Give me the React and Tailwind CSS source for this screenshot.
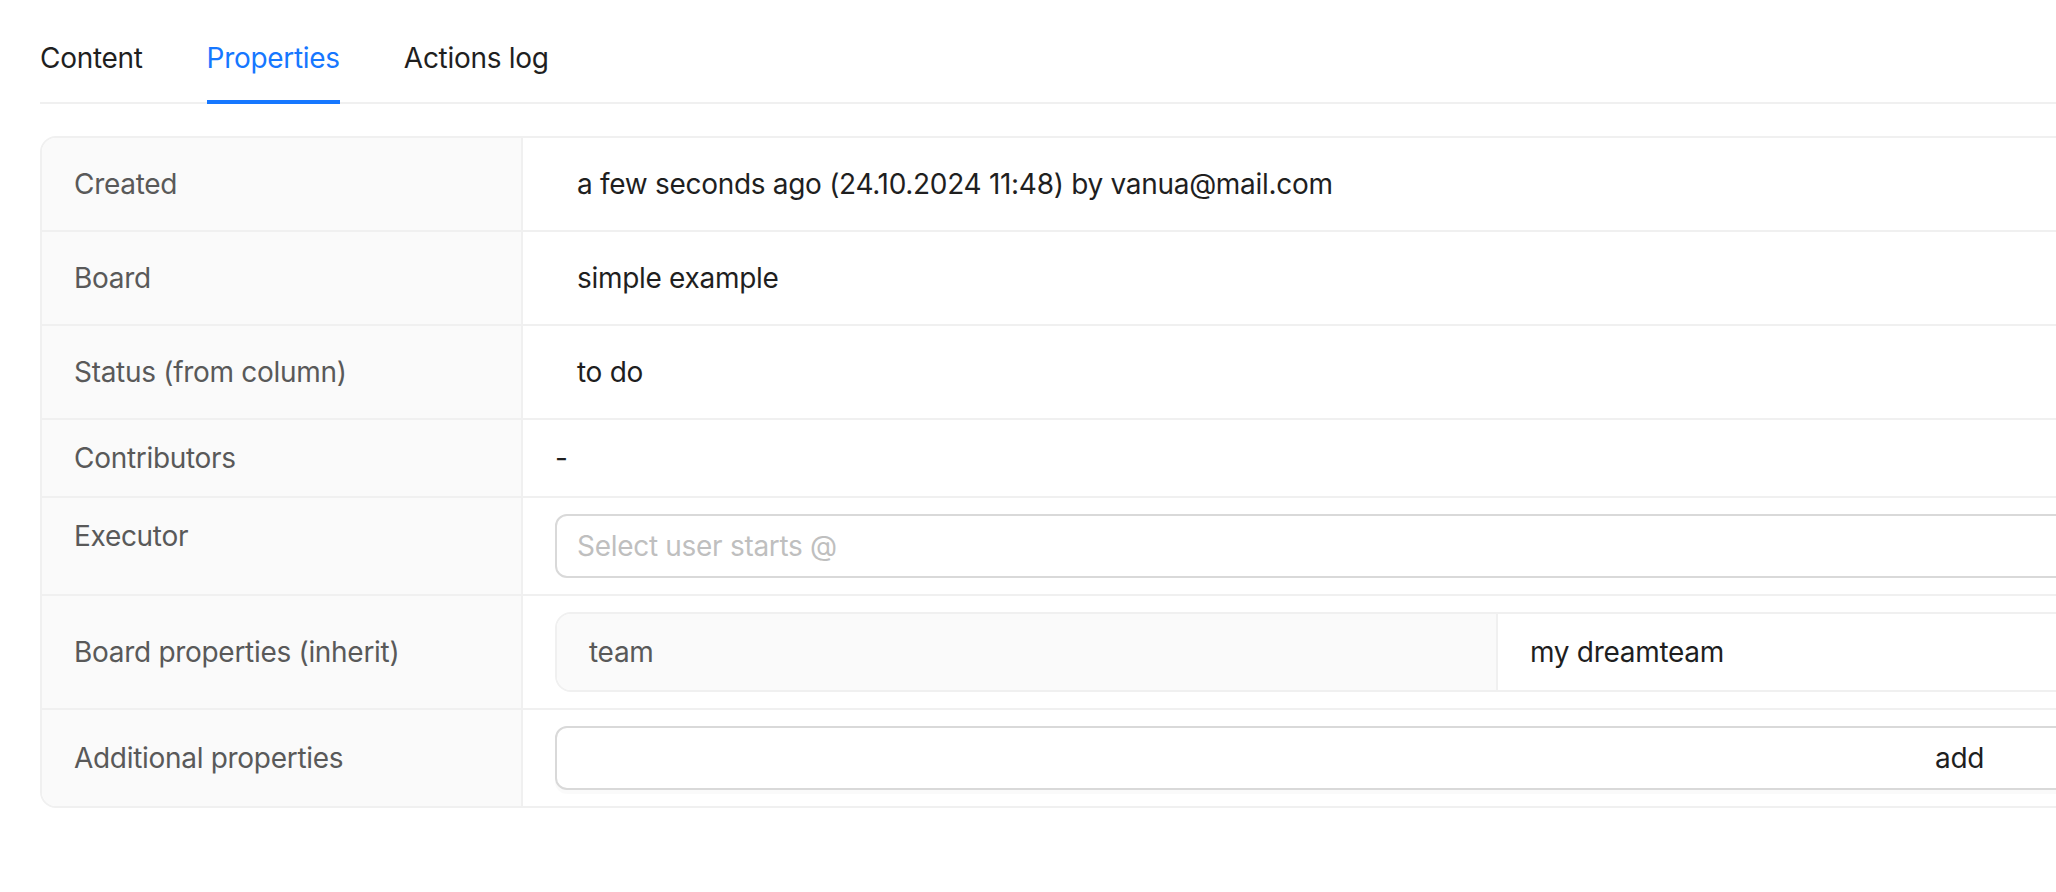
import React from 'react'

const tabs = ['Content', 'Properties', 'Actions log']

function Row({ label, children, last, labelTop }) {
  return (
    <div className={`flex ${last ? '' : 'border-b-2 border-[#f0f0f0]'}`}>
      <div
        className={`w-[481px] shrink-0 bg-[#fafafa] border-r-2 border-[#f0f0f0] px-[32px] py-[16px] flex ${
          labelTop ? 'items-start' : 'items-center'
        } text-[#595959]`}
      >
        {label}
      </div>
      <div className="flex-1 px-[32px] py-[16px] flex items-center text-[#1f1f1f]">{children}</div>
    </div>
  )
}

function Plain({ children }) {
  return <div className="h-[60px] flex items-center pl-[22px]">{children}</div>
}

export default function App() {
  return (
    <div className="w-full h-screen overflow-hidden bg-white font-['Inter','Liberation_Sans',sans-serif] text-[28px] leading-[44px] tracking-[-0.3px]">
      <div className="w-[2480px] pl-[40px] pt-[12px]">
        <div className="flex gap-[64px] border-b-2 border-[#f0f0f0]">
          {tabs.map((t) => (
            <div
              key={t}
              className={`relative pt-[24px] pb-[22px] ${t === 'Properties' ? 'text-[#1677ff]' : 'text-[#1f1f1f]'}`}
            >
              {t}
              {t === 'Properties' && (
                <div className="absolute left-0 right-0 bottom-[-2px] h-[4px] bg-[#1677ff]" />
              )}
            </div>
          ))}
        </div>

        <div className="mt-[32px] border-2 border-[#f0f0f0] rounded-[16px] overflow-hidden">
          <Row label="Created">
            <Plain>a few seconds ago (24.10.2024 11:48) by vanua@mail.com</Plain>
          </Row>
          <Row label="Board">
            <Plain>simple example</Plain>
          </Row>
          <Row label="Status (from column)">
            <Plain>to do</Plain>
          </Row>
          <Row label="Contributors">
            <span>-</span>
          </Row>
          <Row label="Executor" labelTop>
            <div className="w-full h-[64px] border-2 border-[#d9d9d9] rounded-[12px] flex items-center pl-[20px] text-[#bfbfbf]">
              Select user starts @
            </div>
          </Row>
          <Row label="Board properties (inherit)">
            <div className="w-full h-[80px] border-2 border-[#f0f0f0] rounded-[16px] overflow-hidden flex">
              <div className="w-[941px] shrink-0 bg-[#fafafa] border-r-2 border-[#f0f0f0] px-[32px] flex items-center text-[#595959]">
                team
              </div>
              <div className="flex-1 px-[32px] flex items-center text-[#1f1f1f]">my dreamteam</div>
            </div>
          </Row>
          <Row label="Additional properties" last>
            <div className="w-full h-[64px] border-2 border-[#d9d9d9] rounded-[12px] shadow-[0_4px_0_rgba(0,0,0,0.02)] flex items-center">
              <div className="w-[1348px] shrink-0" />
              <div className="px-[30px] text-[#1f1f1f]">add</div>
            </div>
          </Row>
        </div>
      </div>
    </div>
  )
}
